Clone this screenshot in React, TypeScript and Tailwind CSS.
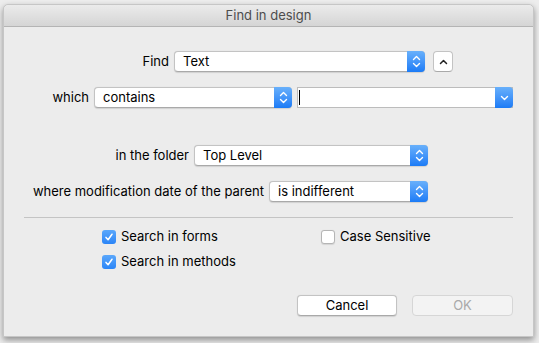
import React from "react";

const font = { fontFamily: 'Inter, "Liberation Sans", Arial, sans-serif' };

function Stepper() {
  return (
    <svg width="9" height="13" viewBox="0 0 9 13" fill="none">
      <path d="M1.5 4.5 L4.5 1.5 L7.5 4.5" stroke="white" strokeWidth="1.4" strokeLinecap="round" strokeLinejoin="round" />
      <path d="M1.5 8.5 L4.5 11.5 L7.5 8.5" stroke="white" strokeWidth="1.4" strokeLinecap="round" strokeLinejoin="round" />
    </svg>
  );
}

function Popup({ value, width }: { value: string; width: string }) {
  return (
    <div
      className={`${width} flex h-[21px] items-stretch rounded-[4px] border border-[#c3c3c3] border-b-[#a9a9a9] bg-white shadow-[0_0.5px_1px_rgba(0,0,0,0.12)]`}
    >
      <div className="flex flex-1 items-center pl-[8px] text-[13px] text-black">{value}</div>
      <div className="-my-px -mr-px flex w-[18px] items-center justify-center rounded-r-[4px] bg-gradient-to-b from-[#68b0fb] to-[#1a7bf6]">
        <Stepper />
      </div>
    </div>
  );
}

function Check({ checked, label }: { checked?: boolean; label: string }) {
  return (
    <div className="flex h-[18px] items-center">
      {checked ? (
        <div className="flex h-[14px] w-[14px] items-center justify-center rounded-[3px] bg-gradient-to-b from-[#5aa7fb] to-[#2a85f7]">
          <svg width="10" height="10" viewBox="0 0 10 10" fill="none">
            <path d="M2 5.4 L4.1 7.8 L8 2.2" stroke="white" strokeWidth="1.5" strokeLinecap="round" strokeLinejoin="round" />
          </svg>
        </div>
      ) : (
        <div className="h-[14px] w-[14px] rounded-[3px] border border-[#b5b5b5] bg-white shadow-[0_0.5px_1px_rgba(0,0,0,0.1)]" />
      )}
      <span className="ml-[5px] text-[13px] text-black">{label}</span>
    </div>
  );
}

export default function App() {
  return (
    <div className="h-[343px] w-[539px] overflow-hidden bg-[#ededed] pl-[3px] pt-[4px]" style={font}>
      <div className="flex h-[333px] w-[531px] flex-col rounded-t-[5px] border border-[#c6c6c6] bg-[#ececec] shadow-[0_3px_6px_rgba(0,0,0,0.4)]">
        <div className="flex h-[22px] items-center justify-center rounded-t-[5px] border-b border-[#b4b4b4] bg-gradient-to-b from-[#ebebeb] to-[#d5d5d5] text-[13px] text-[#4d4d4d]">
          Find in design
        </div>

        <div className="mt-[24px] flex items-center">
          <div className="w-[165px] text-right text-[13px] text-black">Find</div>
          <div className="ml-[5px]">
            <Popup value="Text" width="w-[251px]" />
          </div>
          <div className="ml-[8px] flex h-[21px] w-[20px] items-center justify-center rounded-[4px] border border-[#c3c3c3] border-b-[#a9a9a9] bg-white">
            <svg width="9" height="6" viewBox="0 0 9 6" fill="none">
              <path d="M1.5 4.5 L4.5 1.5 L7.5 4.5" stroke="#222" strokeWidth="1.5" strokeLinecap="round" strokeLinejoin="round" />
            </svg>
          </div>
        </div>

        <div className="mt-[15px] flex items-center">
          <div className="w-[85px] text-right text-[13px] text-black">which</div>
          <div className="ml-[5px]">
            <Popup value="contains" width="w-[198px]" />
          </div>
          <div className="ml-[5px] flex h-[21px] w-[216px] items-stretch border border-[#bcbcbc] bg-white">
            <div className="flex flex-1 items-center pl-[1px]">
              <div className="h-[15px] w-px bg-black" />
            </div>
            <div className="-my-px -mr-px flex w-[18px] items-center justify-center rounded-r-[4px] bg-gradient-to-b from-[#68b0fb] to-[#1a7bf6]">
              <svg width="9" height="6" viewBox="0 0 9 6" fill="none">
                <path d="M1.5 1.5 L4.5 4.5 L7.5 1.5" stroke="white" strokeWidth="1.4" strokeLinecap="round" strokeLinejoin="round" />
              </svg>
            </div>
          </div>
        </div>

        <div className="mt-[37px] flex items-center">
          <div className="w-[185px] text-right text-[13px] text-black">in the folder</div>
          <div className="ml-[5px]">
            <Popup value="Top Level" width="w-[234px]" />
          </div>
        </div>

        <div className="mt-[15px] flex items-center">
          <div className="w-[260px] text-right text-[13px] text-black">where modification date of the parent</div>
          <div className="ml-[5px]">
            <Popup value="is indifferent" width="w-[159px]" />
          </div>
        </div>

        <div className="mx-[20px] mt-[15px] h-px bg-[#c4c4c4]" />

        <div className="mt-[10px] grid grid-cols-[219px_1fr] gap-y-[7px] pl-[98px]">
          <Check checked label="Search in forms" />
          <Check label="Case Sensitive" />
          <Check checked label="Search in methods" />
        </div>

        <div className="mt-[24px] flex justify-end gap-[15px] pr-[20px]">
          <div className="flex h-[21px] w-[100px] items-center justify-center rounded-[4px] border border-[#c3c3c3] border-b-[#a9a9a9] bg-white text-[13px] text-black shadow-[0_0.5px_1px_rgba(0,0,0,0.12)]">
            Cancel
          </div>
          <div className="flex h-[21px] w-[101px] items-center justify-center rounded-[4px] border border-[#d6d6d6] bg-[#f3f3f3] text-[13px] text-[#a9a9a9]">
            OK
          </div>
        </div>
      </div>
    </div>
  );
}
